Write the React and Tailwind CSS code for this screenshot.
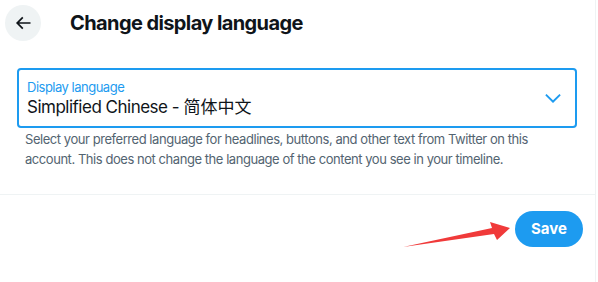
import React from 'react';

const ArrowLeft = () => (
  <svg viewBox="0 0 24 24" className="w-5 h-5" fill="#0f1419">
    <path d="M7.414 13l5.043 5.04-1.414 1.42L3.586 12l7.457-7.46 1.414 1.42L7.414 11H21v2H7.414z" />
  </svg>
);

const Chevron = () => (
  <svg viewBox="0 0 24 24" className="w-[22px] h-[22px]" fill="#1d9bf0">
    <path d="M3.543 8.96l1.414-1.42L12 14.59l7.043-7.05 1.414 1.42L12 17.41 3.543 8.96z" />
  </svg>
);

const App = () => {
  return (
    <div className="relative w-[598px] h-[282px] bg-white font-['Inter','Noto_Sans_CJK_SC',sans-serif] text-[#0f1419]">
      <div className="w-[596px] h-full border-r border-[#eff3f4]">
        {/* Header */}
        <div className="flex items-center h-[45px] pl-[5px]">
          <div className="w-9 h-9 rounded-full bg-[#eff3f4] flex items-center justify-center">
            <ArrowLeft />
          </div>
          <h2 className="ml-[29px] text-[20px] font-bold tracking-[-0.6px]">Change display language</h2>
        </div>

        {/* Select */}
        <div className="pt-[23px] border-b border-[#eff3f4] pb-[25px]">
          <div className="ml-[17px] w-[560px] h-[60px] border-2 border-[#1d9bf0] rounded-[4px] flex items-center pl-2 pr-[11px]">
            <div className="flex-1">
              <div className="text-[13px] leading-4 text-[#1d9bf0] mt-[1px] tracking-[-0.5px]">Display language</div>
              <div className="text-[17px] leading-6">
                <span className="tracking-[-0.5px]">Simplified Chinese - </span>简体中文
              </div>
            </div>
            <Chevron />
          </div>
          <p className="pl-[25px] pr-[51px] pt-[1px] text-[13px] leading-5 text-[#536471] tracking-[-0.45px]">
            Select your preferred language for headlines, buttons, and other text from Twitter on this account. This does not change the language of the content you see in your timeline.
          </p>
        </div>

        {/* Footer */}
        <div className="flex justify-end pt-4 pr-3">
          <button className="h-9 w-[68px] rounded-full bg-[#1d9bf0] text-white text-[15px] font-bold">Save</button>
        </div>
      </div>

      {/* annotation arrow */}
      <svg className="absolute left-0 top-0 pointer-events-none" width="598" height="282">
        <polygon points="403,247 492,228 490,222 510,228 497,240 494,234" fill="#f03a3a" />
      </svg>
    </div>
  );
};

export default App;
